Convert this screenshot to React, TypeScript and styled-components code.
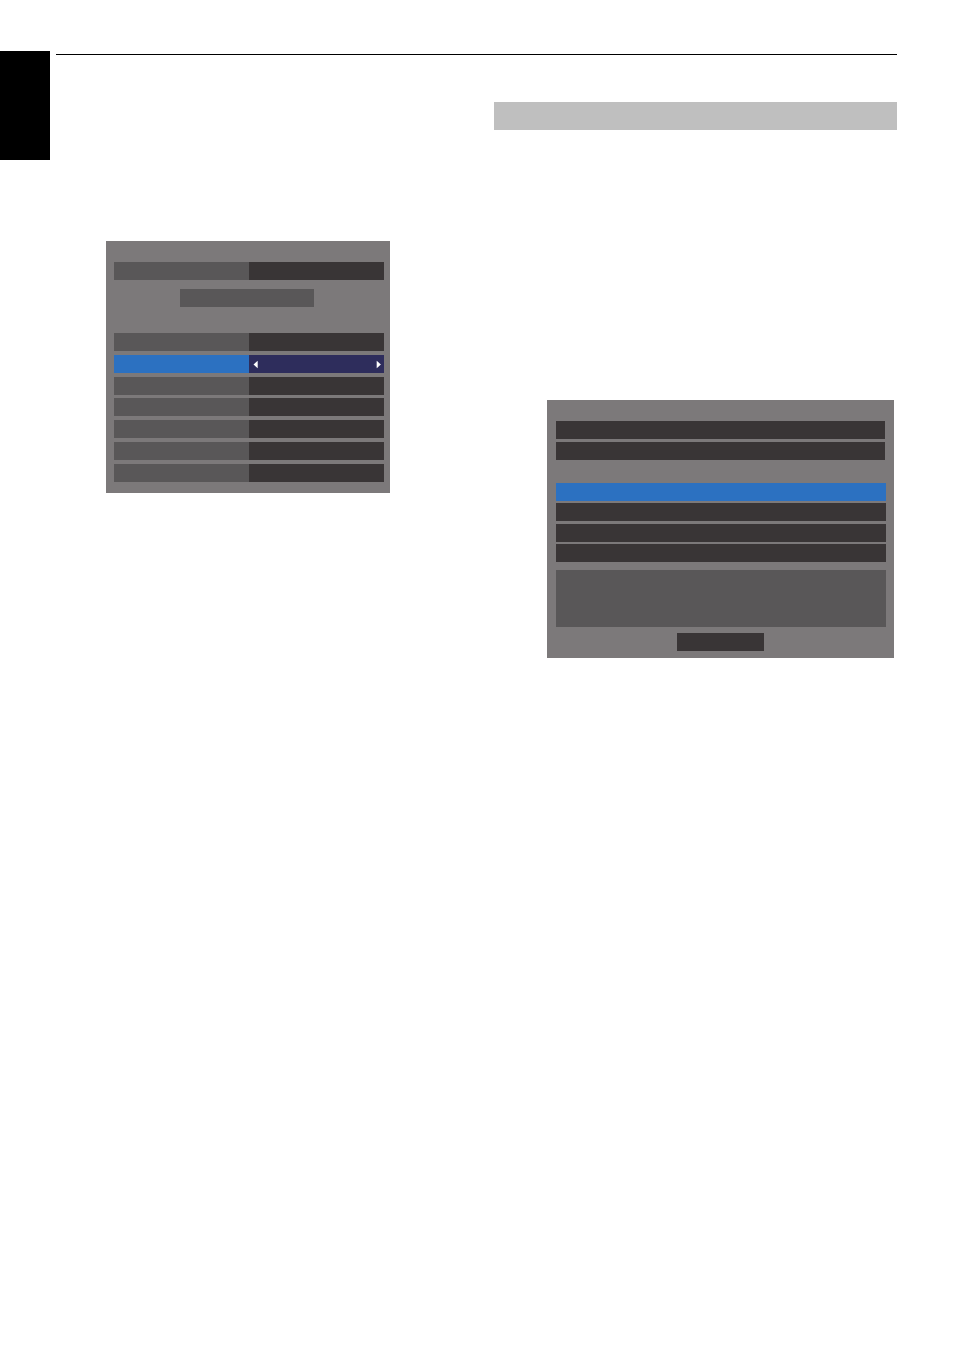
import React from "react";
import styled, { createGlobalStyle } from "styled-components";

const color = {
  panel: "#7c797a",
  label: "#595758",
  value: "#393536",
  active: "#2c71c1",
  activeValue: "#2e2d5c",
  heading: "#bfbfbf",
};

const GlobalStyle = createGlobalStyle`
  *, *::before, *::after { box-sizing: border-box; }
  body {
    margin: 0;
    background: #ffffff;
    font-family: "Liberation Sans", Arial, sans-serif;
  }
`;

const Page = styled.div`
  display: flex;
  align-items: flex-start;
  gap: 6px;
  min-height: 100vh;
  padding-right: 57px;
`;

const ChapterTab = styled.aside`
  flex: 0 0 50px;
  height: 109px;
  margin-top: 51px;
  background: #000000;
`;

const Content = styled.main`
  flex: 1;
  min-width: 0;
  margin-top: 54px;
  border-top: 1px solid #000000;
`;

const Columns = styled.div`
  display: grid;
  grid-template-columns: 1fr 1fr;
  gap: 35px;
`;

const SettingsColumn = styled.section`
  padding: 186px 69px 0 50px;
`;

const BootColumn = styled.section`
  padding-top: 47px;
`;

const SectionHeading = styled.header`
  height: 28px;
  background: ${color.heading};
`;

const SettingsPanel = styled.div`
  padding: 21px 6px 11px 8px;
  background: ${color.panel};
`;

const BootPanel = styled.div`
  margin: 270px 3px 0 53px;
  padding: 21px 8px 7px 9px;
  background: ${color.panel};
`;

const RowGroup = styled.div<{ $gap: number; $top?: number; $right?: number }>`
  display: flex;
  flex-direction: column;
  gap: ${(p) => p.$gap}px;
  margin-top: ${(p) => p.$top ?? 0}px;
  margin-right: ${(p) => p.$right ?? 0}px;
`;

const SettingRow = styled.div`
  display: grid;
  grid-template-columns: 1fr 1fr;
  height: 18px;
`;

const SettingLabel = styled.div<{ $active?: boolean }>`
  background: ${(p) => (p.$active ? color.active : color.label)};
`;

const SettingValue = styled.div<{ $active?: boolean }>`
  display: flex;
  align-items: center;
  justify-content: space-between;
  padding: 0 3px 0 4px;
  background: ${(p) => (p.$active ? color.activeValue : color.value)};
`;

const StepButton = styled.button`
  display: flex;
  padding: 0;
  border: 0;
  background: none;
`;

const OptionBar = styled.div<{ $active?: boolean }>`
  height: 18px;
  background: ${(p) => (p.$active ? color.active : color.value)};
`;

const ButtonRow = styled.div<{ $top: number; $right: number }>`
  display: flex;
  justify-content: center;
  margin-top: ${(p) => p.$top}px;
  padding-right: ${(p) => p.$right}px;
`;

const PanelButton = styled.button<{ $width: number; $dark?: boolean }>`
  width: ${(p) => p.$width}px;
  height: 18px;
  padding: 0;
  border: 0;
  background: ${(p) => (p.$dark ? color.value : color.label)};
`;

const Description = styled.div`
  height: 57px;
  margin-top: 8px;
  background: ${color.label};
`;

function Setting({ active }: { active?: boolean }) {
  return (
    <SettingRow>
      <SettingLabel $active={active} />
      <SettingValue $active={active}>
        {active && (
          <>
            <StepButton type="button" aria-label="Previous">
              <svg width="5" height="10" viewBox="0 0 5 10" aria-hidden="true">
                <path d="M4.7 1.7V9.3L0.5 5.5Z" fill="#ffffff" />
              </svg>
            </StepButton>
            <StepButton type="button" aria-label="Next">
              <svg width="5" height="10" viewBox="0 0 5 10" aria-hidden="true">
                <path d="M0.7 1.7V9.3L4.9 5.5Z" fill="#ffffff" />
              </svg>
            </StepButton>
          </>
        )}
      </SettingValue>
    </SettingRow>
  );
}

export default function App() {
  return (
    <>
      <GlobalStyle />
      <Page>
        <ChapterTab />
        <Content>
          <Columns>
            <SettingsColumn>
              <SettingsPanel>
                <Setting />
                <ButtonRow $top={9} $right={4}>
                  <PanelButton type="button" $width={134} aria-label="Apply" />
                </ButtonRow>
                <RowGroup $gap={4} $top={26}>
                  <Setting />
                  <Setting active />
                  <Setting />
                </RowGroup>
                <RowGroup $gap={4} $top={3}>
                  <Setting />
                  <Setting />
                  <Setting />
                  <Setting />
                </RowGroup>
              </SettingsPanel>
            </SettingsColumn>
            <BootColumn>
              <SectionHeading />
              <BootPanel>
                <RowGroup $gap={3} $right={1}>
                  <OptionBar />
                  <OptionBar />
                </RowGroup>
                <RowGroup $gap={2} $top={23}>
                  <OptionBar $active />
                  <OptionBar />
                </RowGroup>
                <RowGroup $gap={2} $top={3}>
                  <OptionBar />
                  <OptionBar />
                </RowGroup>
                <Description />
                <ButtonRow $top={6} $right={1}>
                  <PanelButton type="button" $width={87} $dark aria-label="Close" />
                </ButtonRow>
              </BootPanel>
            </BootColumn>
          </Columns>
        </Content>
      </Page>
    </>
  );
}
